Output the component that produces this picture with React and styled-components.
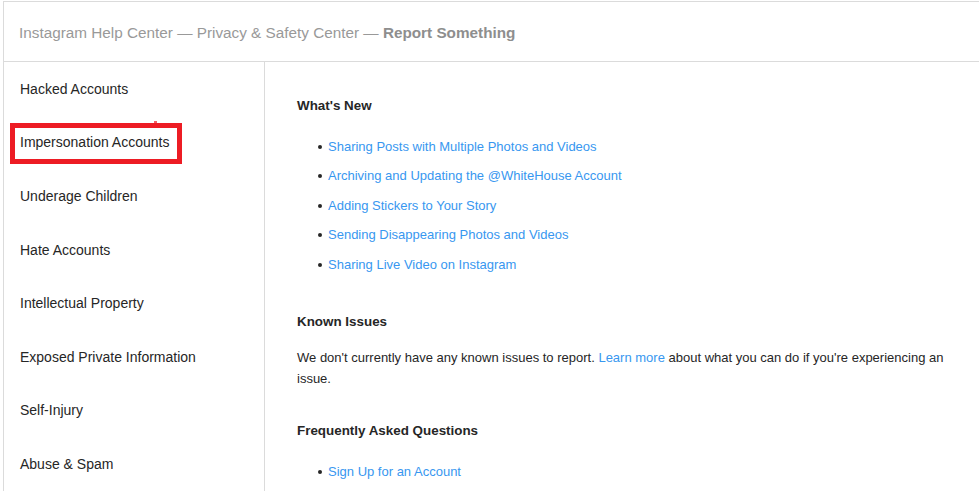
import React from 'react';
import styled, { createGlobalStyle } from 'styled-components';

const GlobalStyle = createGlobalStyle`
  html, body {
    margin: 0;
    padding: 0;
    background: #fff;
    overflow: hidden;
  }
  body {
    font-family: "Liberation Sans", Arial, sans-serif;
    color: #262626;
    -webkit-font-smoothing: antialiased;
  }
`;

const Frame = styled.div`
  margin: 1px 0 0 3px;
  width: 1100px;
  border: 1px solid #dbdbdb;
  border-right: none;
  box-sizing: border-box;
`;

const Header = styled.header`
  height: 60px;
  box-sizing: border-box;
  display: flex;
  align-items: center;
  padding: 2px 0 0 15px;
  border-bottom: 1px solid #dbdbdb;
  font-size: 15.3px;
  color: #999;
  b {
    font-weight: 700;
    color: #8e8e8e;
  }
`;

const Body = styled.div`
  display: flex;
  min-height: 440px;
`;

const Sidebar = styled.nav`
  width: 260px;
  flex-shrink: 0;
  border-right: 1px solid #dbdbdb;
`;

const NavItem = styled.div`
  height: 53.6px;
  display: flex;
  align-items: center;
  padding-left: 16px;
  font-size: 14px;
  color: #262626;
`;

const Label = styled.span`
  position: relative;
  display: inline-block;
  line-height: 20px;
  ${({ $marked }) =>
    $marked &&
    `
    &::after {
      content: '';
      position: absolute;
      left: -10px;
      right: -13px;
      top: -9px;
      bottom: -12px;
      border: 5px solid #ed1c24;
      box-sizing: border-box;
    }
    &::before {
      content: '';
      position: absolute;
      right: 12px;
      top: -11px;
      width: 3px;
      height: 2px;
      background: #ed1c24;
      opacity: 0.7;
    }
  `}
`;

const Main = styled.main`
  flex: 1;
  padding: 34px 0 0 32px;
`;

const Heading = styled.h2`
  margin: 0;
  font-size: 13.4px;
  line-height: 20px;
  font-weight: 700;
  color: #262626;
`;

const List = styled.ul`
  list-style: none;
  margin: ${({ $top }) => $top}px 0 0;
  padding: 0 0 0 31px;
`;

const Item = styled.li`
  position: relative;
  font-size: 13px;
  line-height: 20px;
  & + & {
    margin-top: 9.5px;
  }
  &::before {
    content: '';
    position: absolute;
    left: -10px;
    top: 8px;
    width: 4px;
    height: 4px;
    border-radius: 50%;
    background: #262626;
  }
`;

const Link = styled.a`
  color: #3897f0;
  text-decoration: none;
`;

const Section = styled.section`
  margin-top: ${({ $top }) => $top}px;
`;

const Paragraph = styled.p`
  margin: 15px 0 0;
  max-width: 668px;
  font-size: 13px;
  line-height: 21px;
  color: #262626;
`;

const navItems = [
  'Hacked Accounts',
  'Impersonation Accounts',
  'Underage Children',
  'Hate Accounts',
  'Intellectual Property',
  'Exposed Private Information',
  'Self-Injury',
  'Abuse & Spam',
];

const whatsNew = [
  'Sharing Posts with Multiple Photos and Videos',
  'Archiving and Updating the @WhiteHouse Account',
  'Adding Stickers to Your Story',
  'Sending Disappearing Photos and Videos',
  'Sharing Live Video on Instagram',
];

const App = () => (
  <>
    <GlobalStyle />
    <Frame>
      <Header>
        Instagram Help Center — Privacy &amp; Safety Center —&nbsp;<b>Report Something</b>
      </Header>
      <Body>
        <Sidebar>
          {navItems.map((name) => (
            <NavItem key={name}>
              <Label $marked={name === 'Impersonation Accounts'}>{name}</Label>
            </NavItem>
          ))}
        </Sidebar>
        <Main>
          <Section $top={0}>
            <Heading>What's New</Heading>
            <List $top={20.5}>
              {whatsNew.map((t) => (
                <Item key={t}>
                  <Link href="#">{t}</Link>
                </Item>
              ))}
            </List>
          </Section>
          <Section $top={37}>
            <Heading>Known Issues</Heading>
            <Paragraph>
              We don't currently have any known issues to report. <Link href="#">Learn more</Link> about
              what you can do if you're experiencing an issue.
            </Paragraph>
          </Section>
          <Section $top={32.5}>
            <Heading>Frequently Asked Questions</Heading>
            <List $top={20.5}>
              <Item>
                <Link href="#">Sign Up for an Account</Link>
              </Item>
            </List>
          </Section>
        </Main>
      </Body>
    </Frame>
  </>
);

export default App;
